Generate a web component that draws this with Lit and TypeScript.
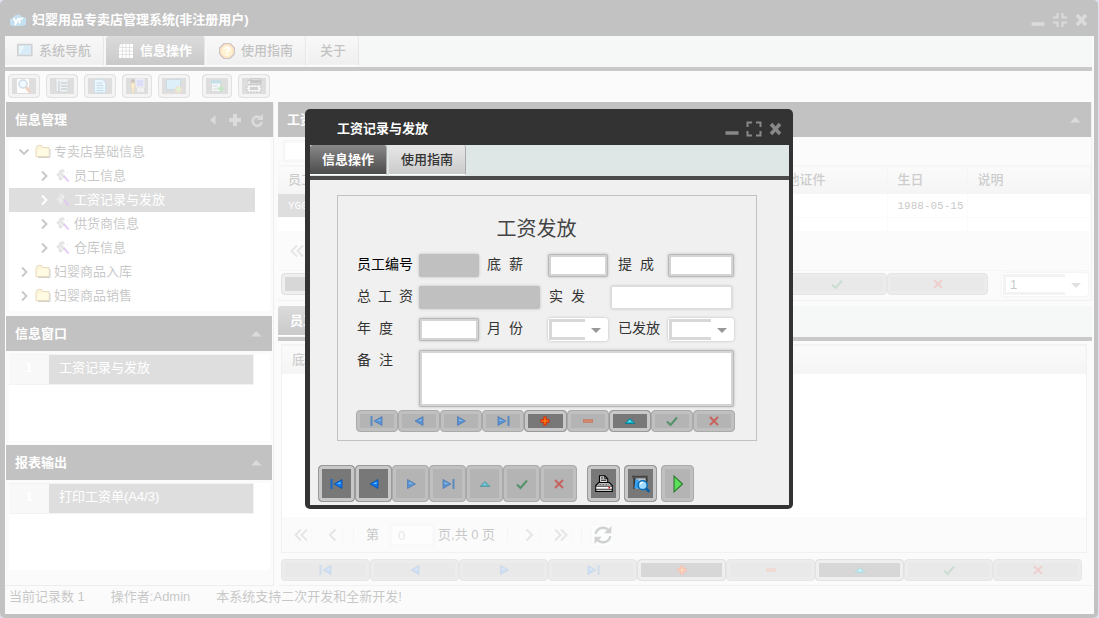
import { LitElement, html, css, svg, TemplateResult } from "lit";
import { customElement } from "lit/decorators.js";
import { classMap } from "lit/directives/class-map.js";

const shapes: Record<string, TemplateResult> = {
  first: svg`<path d="M2.5 3v10" stroke="#1468c8" stroke-width="2"/><path d="M13 3.5v9L5 8z" fill="#0a78f0" stroke="#0a4fa8" stroke-width=".8"/><path d="M11.5 6v2H8z" fill="#7cc4ff"/>`,
  prev: svg`<path d="M12 3.5v9L4 8z" fill="#0a78f0" stroke="#0a4fa8" stroke-width=".8"/><path d="M10.500 6v2H7z" fill="#7cc4ff"/>`,
  next: svg`<path d="M4.500 3.500v9l8-4.500z" fill="#0a78f0" stroke="#0a4fa8" stroke-width=".8"/><path d="M6 6v2h4z" fill="#7cc4ff"/>`,
  last: svg`<path d="M13.500 3v10" stroke="#1468c8" stroke-width="2"/><path d="M3 3.500v9L11 8z" fill="#0a78f0" stroke="#0a4fa8" stroke-width=".8"/><path d="M4.500 6v2h4z" fill="#7cc4ff"/>`,
  add: svg`<path d="M8 3.500v9M3.500 8h9" stroke="#e02800" stroke-width="3.400"/><path d="M8 4.500v7M4.500 8h7" stroke="#ff9a20" stroke-width="1"/>`,
  remove: svg`<path d="M3 8h10" stroke="#e02800" stroke-width="3.200"/><path d="M3.500 8h9" stroke="#ffa060" stroke-width="1"/>`,
  edit: svg`<path d="M3 10.500h10L8 5.500z" fill="#10b8d0" stroke="#087890" stroke-width=".8"/><path d="M6 9h3L8 7z" fill="#7ceaff"/>`,
  check: svg`<path d="M3 8.500l3.500 3.500L13 4.500" stroke="#087830" stroke-width="2" fill="none"/>`,
  cross: svg`<path d="M4 4l8 8M12 4l-8 8" stroke="#d81c10" stroke-width="1.800" fill="none"/>`,
  print: svg`<g transform="scale(.667)"><path d="M6 10V1h7l4 4v5" fill="#ddd" stroke="#000" stroke-width="1.500"/><path d="M13 1v4h4M8 4h3M8 7h7" stroke="#000" stroke-width="1.200" fill="none"/><path d="M1 14l4-4h14l4 4v8H1z" fill="#ccc" stroke="#000" stroke-width="1.500"/><path d="M1 15h22v4H1z" fill="#fff" stroke="#000"/><path d="M5 12.500h14" stroke="#555" stroke-width="2" stroke-dasharray="1 1"/><path d="M18 17h2" stroke="#e00" stroke-width="2"/></g>`,
  preview: svg`<path d="M0 1.500h14" stroke="#444" stroke-width="1.600"/><path d="M2 2.500v10M13 2.500v4" stroke="#333" stroke-width="1.500"/><path d="M4 3h8v9H3z" fill="#c0c8d0"/><path d="M3 4h3v8H2z" fill="#38a0f0"/><circle cx="9.500" cy="9" r="4" fill="#9fdcff" stroke="#0870b8" stroke-width="1.400"/><path d="M7.500 8.500a2 2 0 0 1 2-2" stroke="#fff" stroke-width="1.400" fill="none"/><path d="M12.500 12l3 3" stroke="#0860a8" stroke-width="2.400"/>`,
  run: svg`<path d="M4.500 1v14L12 8z" fill="#5be05b" stroke="#2a7a2a"/>`,
  search: svg`<path d="M1 1h12v14H1z" fill="#f4f4f4"/><circle cx="7" cy="6" r="4" fill="#cdeaff" stroke="#5888a8" stroke-width="1.500"/><path d="M10 9l4 5" stroke="#d07040" stroke-width="3"/>`,
  list: svg`<path d="M2 2h12v12H2z" fill="#c8d8e0" stroke="#777"/><path d="M5 3v11M7 5h6M7 8h6M7 11h6" stroke="#556878" stroke-width="1.400"/><path d="M2 2h12" stroke="#fff"/>`,
  doc: svg`<path d="M2.500 1.500h8l3 3v10h-11z" fill="#b8e4fc" stroke="#5898c0"/><path d="M4.500 5h6M4.500 7.500h7M4.500 10h7M4.500 12.500h7" stroke="#3880b0"/>`,
  users: svg`<path d="M7 1h8v8H7z" fill="#8890e0" stroke="#ddd"/><path d="M8 10h7v4H8z" fill="#ccc"/><circle cx="4" cy="3" r="2" fill="#5a4030"/><path d="M2 5h4v5H5v5H3v-5H2z" fill="#f0c060" stroke="#a87828" stroke-width=".6"/>`,
  screen: svg`<path d="M.500 1.500h14v10h-14z" fill="#8cc8e8" stroke="#5888a8"/><path d="M1 12.500h9" stroke="#888" stroke-width="1.500"/><circle cx="12.500" cy="11.500" r="3" fill="#98d870" stroke="#d89060" stroke-width="1.200"/>`,
  form: svg`<path d="M2.500 2.500h9v11h-9z" fill="#d8e8f0" stroke="#888"/><path d="M2 4h10" stroke="#3898b8" stroke-width="3"/><path d="M4 8h5M4 11h4" stroke="#888"/><path d="M12 7v7M8.500 10.500h7" stroke="#38a838" stroke-width="1.800"/>`,
  fax: svg`<path d="M1 3h2l1-2h11v5H3" fill="#ddd" stroke="#333"/><path d="M4 3.500h11" stroke="#444" stroke-width="3"/><path d="M1 7h14v7H1z" fill="#ddd" stroke="#444" stroke-dasharray="2 1"/><path d="M4 9h8v3H4z" fill="#666"/>`,
  window: svg`<path d="M.800 1.500h14v11H.800z" fill="#7cc0e4" stroke="#666" stroke-width="1.600"/><path d="M2 3h6l-5 8H2z" fill="#b4e0f4"/>`,
  grid: svg`<path d="M3 1h12v14H1V4z" fill="#fff"/><path d="M1 4.500h14M1 8h14M1 11.500h14M4.500 1v14M8 1v14M11.500 1v14" stroke="#888" stroke-width=".8"/>`,
  help: svg`<path d="M5 .500h6L15.500 5v6L11 15.500H5L.500 11V5z" fill="#f0a840" stroke="#5a3a3c" stroke-width="1.200"/><circle cx="8" cy="8" r="5.500" fill="#ffd870"/><path d="M6 6.200a2 2 0 1 1 2.600 2c-.5.200-.6.600-.6 1.200M8 11v1.600" stroke="#fff" stroke-width="1.800" fill="none"/>`,
  folder: svg`<path d="M1 4l1.500-2.500h4L8 3.500h6v9H1z" fill="#f6dc83" stroke="#b8822e"/><path d="M2.500 5h11v7h-11z" fill="#fff0a0"/><path d="M15 5v8.500H3" stroke="#666" fill="none"/>`,
  leaf: svg`<path d="M5 2l3-1 2 3-2 1 1 4-3 4-3-2 1-2-3-2 2-2H3z" fill="#aaa"/><path d="M7 4l2 2M5 7l2 3" stroke="#eee"/><path d="M8.500 7.500l5 6" stroke="#a040d8" stroke-width="1.800"/><path d="M12 4.500h1" stroke="#999"/>`,
  open: svg`<path d="M3.500 5.500L8 10l4.500-4.500" stroke="currentColor" stroke-width="1.800" fill="none"/>`,
  closed: svg`<path d="M6 3.500L10.500 8 6 12.500" stroke="currentColor" stroke-width="1.800" fill="none"/>`,
  left: svg`<path d="M10.500 3v10L5 8z" fill="#858585"/>`,
  plus: svg`<path d="M8 2v12M2 8h12" stroke="#858585" stroke-width="4"/>`,
  reload: svg`<path d="M12 6.500A4.600 4.600 0 1 0 12.800 10" stroke="#858585" stroke-width="2.600" fill="none"/><path d="M14 2v6H8z" fill="#858585"/>`,
  up: svg`<path d="M3 10.500h10.500L8.200 5z" fill="#858585"/>`,
  min: svg`<path d="M1.500 12h13" stroke="#888" stroke-width="3.500"/>`,
  max: svg`<path d="M1.500 6V1.500H6M10 1.500h4.500V6M14.500 10v4.500H10M6 14.500H1.500V10" stroke="#888" stroke-width="2" fill="none"/>`,
  restore: svg`<path d="M1 5.500h4.500V1M10.500 1v4.500H15M15 10.500h-4.500V15M5.500 15v-4.500H1" stroke="#888" stroke-width="2" fill="none"/>`,
  close: svg`<path d="M3 3l9 10M12 3L3 13" stroke="#888" stroke-width="3.500"/>`,
  pfirst: svg`<path d="M8 2.500L2.500 8 8 13.500M14 2.500L8.500 8l5.500 5.500" stroke="#aaa" stroke-width="2" fill="none"/>`,
  pprev: svg`<path d="M10.500 2.500L5 8l5.500 5.500" stroke="#aaa" stroke-width="2" fill="none"/>`,
  pnext: svg`<path d="M5.500 2.500L11 8l-5.500 5.500" stroke="#aaa" stroke-width="2" fill="none"/>`,
  plast: svg`<path d="M2 2.500L7.500 8 2 13.500M8 2.500L13.500 8 8 13.500" stroke="#aaa" stroke-width="2" fill="none"/>`,
  refresh: svg`<path d="M1.500 7A6.500 6.500 0 0 1 13 4M14.500 9A6.500 6.500 0 0 1 3 12" stroke="#666" stroke-width="2.200" fill="none"/><path d="M15.500 0v6.500H9zM.500 16V9.500H7z" fill="#666"/>`,
  logo: svg`<path d="M4 14a4 4 0 0 1-1-8 5 5 0 0 1 9-1 4.500 4.500 0 0 1 1 9z" fill="#3c9cd0"/><path d="M3.500 6L6 10.500M8.500 6L5 13M9.500 11.500V8q.5-2 3.500-1.500" stroke="#fff" stroke-width="1.800" fill="none"/>`,
};

const icon = (name: string) =>
  html`<svg class="icon" viewBox="0 0 16 16" aria-hidden="true">${shapes[name]}</svg>`;

const names: Record<string, string> = {
  first: "首条", prev: "上一条", next: "下一条", last: "末条", add: "新增",
  remove: "删除", edit: "编辑", check: "保存", cross: "取消",
};

const navBar = (keys: string[], enabled: string[]) => keys.map(
  (k) => html`<button class="key" aria-label=${names[k]} ?disabled=${!enabled.includes(k)}>${icon(k)}</button>`
);

const allKeys = ["first", "prev", "next", "last", "add", "remove", "edit", "check", "cross"];

const pageButton = (name: string, label: string, live = false) =>
  html`<button class=${classMap({ page: true, live })} aria-label=${label}>${icon(name)}</button>`;

const tree = [
  { level: 0, open: true, text: "专卖店基础信息" },
  { level: 1, text: "员工信息" },
  { level: 1, text: "工资记录与发放", selected: true },
  { level: 1, text: "供货商信息" },
  { level: 1, text: "仓库信息" },
  { level: 0, text: "妇婴商品入库" },
  { level: 0, text: "妇婴商品销售" },
];

@customElement("app-root")
export class AppRoot extends LitElement {
  static styles = css`
    :host {
      display: block;
      position: relative;
      min-height: 100vh;
      background: #8aa0c8;
      font: 13px/20px "Liberation Sans", "Noto Sans CJK SC", sans-serif;
      color: #444;
    }
    * { box-sizing: border-box; }
    button, input, select, textarea { font: inherit; color: inherit; margin: 0; padding: 0; min-width: 0; }
    button { cursor: pointer; }
    h1, h2, h3 { margin: 0; font-size: 13px; font-weight: 700; }
    ul { list-style: none; margin: 0; padding: 0; }
    .icon { width: 16px; height: 16px; display: block; flex: none; }

    .frame {
      min-height: 100vh;
      margin-right: 1px;
      padding: 0 4px 4px 5px;
      background: #333;
      border-radius: 5px;
      display: flex;
      flex-direction: column;
    }
    .title { height: 36px; padding: 3px 4px 0 5px; display: flex; align-items: center; gap: 6px; color: #fff; }
    .title h1 { flex: 1; }
    .tool { border: 0; background: none; }
    .inner { flex: 1; background: #f0f0f0; display: flex; flex-direction: column; padding-right: 2px; }

    .tabs { display: flex; gap: 2px; height: 35px; background: #dfe6e6; border-bottom: 4px solid #4b4b4b; }
    .tab {
      height: 30px;
      padding: 0 12px;
      display: flex;
      align-items: center;
      gap: 6px;
      border: 0;
      border-right: 1px solid #aaa;
      border-bottom: 1px solid #fff;
      border-radius: 3px 3px 0 0;
      background: linear-gradient(#e8e8e8, #cacaca);
      font-weight: 500;
      color: #333;
    }
    .tab.on { background: linear-gradient(#888, #4c4c4c); color: #fff; font-weight: 700; }

    .toolbar { display: flex; gap: 6px; padding: 3px; height: 31px; }
    .key {
      flex: 1;
      height: 22px;
      display: flex;
      align-items: center;
      justify-content: center;
      border: 1px solid #999;
      border-radius: 4px;
      background: #787878;
      box-shadow: inset 0 0 0 3px #c8c8c8;
    }
    .key:disabled { background: #b4b4b4; border-color: #aaa; box-shadow: inset 0 0 0 3px #c0c0c0; }
    .key:disabled .icon { opacity: .55; }
    .toolbar .key { flex: none; width: 32px; height: 24px; background: #909090; box-shadow: inset 0 0 0 3px #dadada; }
    .toolbar .narrow { width: 30px; }
    .toolbar .split { margin-left: 6px; }

    .columns { flex: 1; display: grid; grid-template-columns: 269px minmax(0, 1fr); gap: 4px; }
    .side { border: 1px solid #c6c6c6; border-top: 0; border-left-color: #fff; }
    .bar { height: 35px; padding: 0 8px 0 9px; display: flex; align-items: center; gap: 6px; background: #333; color: #fff; }
    .bar h2 { flex: 1; }
    .box { background: #fff; margin: 3px; }
    .tree { height: 171px; margin-bottom: 5px; }
    .node { height: 24px; width: 246px; padding-left: 7px; display: flex; align-items: center; gap: 3px; }
    .node.deep { padding-left: 27px; }
    .node.selected { background: #919191; color: #fff; }
    .side .bar.low { margin-right: 1px; }
    .list { height: 87px; margin-bottom: 4px; }
    .entry { width: 245px; height: 31px; display: flex; line-height: 26px; color: #fff; background: #919191; border: 1px solid #d8d8d8; border-left: 0; }
    .entry b { width: 40px; text-align: center; background: #e8e8e8; margin-right: 10px; }

    .main { display: flex; flex-direction: column; min-width: 0; border-bottom: 1px solid #d0d0d0; }
    .panel { border: 1px solid #d0d0d0; border-width: 0 1px 1px 0; margin-bottom: 5px; }
    .find { height: 28px; padding: 3px 5px; }
    input, textarea { border: 3px solid #d4d4d4; border-radius: 2px; background: #fff; outline: 1px solid #bababa; outline-offset: -1px; box-shadow: 0 0 3px #bbb; display: block; }
    .find input { width: 122px; height: 22px; border-color: #eaeaea; outline-color: #ddd; box-shadow: none; }
    table { width: 100%; border-collapse: collapse; table-layout: fixed; background: #fff; }
    th { height: 28px; padding: 0 10px; text-align: left; font-weight: 500; color: #555; background: linear-gradient(#f0f0f0, #dcdcdc); border: 1px solid #ddd; border-left: 0; }
    td { height: 24px; padding: 0 10px; font: 11px/20px "Liberation Mono", monospace; border: 1px solid #f0f0f0; border-left: 0; white-space: nowrap; overflow: hidden; }
    td.selected { background: #919191; color: #fff; }
    tr.short td { height: 14px; }
    .c-id { width: 485px; }
    .c-cert { width: 124px; }
    .c-date { width: 80px; }
    .pager { display: flex; align-items: center; gap: 9px; height: 38px; padding: 0 7px; }
    .page { width: 23px; height: 23px; border: 1px solid #e6eaea; border-radius: 3px; background: #f0f2f2; display: grid; place-items: center; }
    .page.live { background: #f6f8f8; }
    .page.live .icon { width: 18px; height: 18px; }
    .rule { width: 1px; height: 15px; background: #ddd; }
    .pages { display: flex; align-items: center; gap: 3px; padding: 0 3px; }
    .pages label { display: flex; align-items: center; gap: 10px; }
    .pages input { width: 46px; height: 24px; padding-left: 6px; border-color: #ececec; outline-color: #e6e6e6; box-shadow: none; background: #f8f8f8; color: #aaa; }
    .keys { display: flex; }
    .upper { display: flex; gap: 14px; height: 30px; padding: 2px 3px 0; border-top: 1px solid #e0e0e0; }
    .upper .keys { flex: 1; max-width: 707px; }
    .upper .combo { width: 86px; }
    .detail { flex: 1; margin: 3px 5px 6px 3px; border: 1px solid #d0d0d0; display: flex; flex-direction: column; }
    .detail .blank { flex: 1; background: #fff; }
    .detail .pager { height: 35px; padding-top: 1px; }
    .main > .keys { margin: 0 10px 4px 3px; }
    .status { display: flex; gap: 26px; height: 28px; padding: 1px 4px; }

    .mask { position: absolute; inset: 0; display: grid; place-items: center; padding-right: 1px; background: rgba(255, 255, 255, .7); }
    .dialog { width: 488px; background: #333; border-radius: 5px; padding: 0 4px 4px 5px; }
    .dialog .title { padding: 3px 5px 0 27px; }
    .dialog .inner { padding-right: 0; }
    .body { padding: 15px 32px 0 27px; }
    .form { border: 1px solid #c2c2c2; padding: 18px 22px 8px 19px; display: flex; flex-direction: column; gap: 9px; min-width: 0; margin: 0; }
    .form h3 { font-size: 20px; line-height: 31px; font-weight: 400; text-align: center; padding-right: 18px; }
    .row { display: grid; grid-template-columns: 62px 68px 61px 70px 50px 66px; font-size: 14px; align-items: start; }
    .row.wide { grid-template-columns: 62px 130px 62px 122px; }
    .row.note { grid-template-columns: 62px 1fr; }
    .row label { width: 36px; text-align-last: justify; color: #333; line-height: 20px; white-space: nowrap; }
    .row .three { width: 56px; }
    .row .full { width: auto; text-align-last: auto; }
    .row .key-field { color: #000; }
    .row input { height: 23px; width: 60px; }
    .row .last { width: 66px; }
    .row input:disabled { border-color: #c0c0c0; background: #c0c0c0; outline: 0; }
    .row .long { width: 121px; }
    .row .plain { width: 121px; border: 1px solid #ddd; outline: 0; }
    textarea { height: 57px; width: 100%; resize: none; }
    .combo { display: flex; width: 60px; height: 23px; padding: 1px; background: #fff; border-radius: 3px; box-shadow: 0 0 3px #bbb; }
    .combo.last { width: 66px; }
    .combo select { flex: 1; appearance: none; border: 3px solid #d8d8d8; border-right: 0; background: #fff; padding-left: 4px; line-height: 15px; }
    .arrow { width: 22px; display: grid; place-items: center; padding-top: 2px; }
    .arrow::before { content: ""; border: 5px solid transparent; border-top-color: #999; border-bottom: 0; }
    .form .keys { margin: -6px -1px 0 -1px; }
    .actions { display: flex; padding: 24px 0 3px 8px; }
    .actions .key { flex: none; width: 37px; height: 37px; }
    .actions .tall { width: 33px; margin-right: 4px; }
    .actions .tall:disabled .icon { opacity: 1; }
    .actions .tall .icon { width: 18px; height: 18px; }
    .actions .start { margin-left: 10px; }
  `;

  private combo(id: string, value: string, size = "") {
    return html`
      <span class="combo ${size}">
        <select id=${id} aria-label=${value ? "页码" : id}><option>${value}</option></select>
        <span class="arrow"></span>
      </span>`;
  }

  private windowTools(size: string) {
    return html`
      <button class="tool" aria-label="最小化">${icon("min")}</button>
      <button class="tool" aria-label="缩放">${icon(size)}</button>
      <button class="tool" aria-label="关闭">${icon("close")}</button>`;
  }

  private sidePanel(title: string, entry: string) {
    return html`
      <div class="bar low"><h2>${title}</h2><button class="tool" aria-label="折叠">${icon("up")}</button></div>
      <div class="box list"><div class="entry"><b>1</b>${entry}</div></div>`;
  }

  private side() {
    return html`
      <aside class="side">
        <div class="bar">
          <h2>信息管理</h2>
          <button class="tool" aria-label="收起">${icon("left")}</button>
          <button class="tool" aria-label="添加">${icon("plus")}</button>
          <button class="tool" aria-label="刷新">${icon("reload")}</button>
        </div>
        <ul class="box tree">
          ${tree.map((n) => html`
            <li class=${classMap({ node: true, deep: n.level === 1, selected: !!n.selected })}>
              ${icon(n.open ? "open" : "closed")}${icon(n.level ? "leaf" : "folder")}<span>${n.text}</span>
            </li>`)}
        </ul>
        ${this.sidePanel("信息窗口", "工资记录与发放")}
        ${this.sidePanel("报表输出", "打印工资单(A4/3)")}
      </aside>`;
  }

  private main() {
    return html`
      <main class="main">
        <section class="panel">
          <div class="bar"><h2>工资记录</h2><button class="tool" aria-label="折叠">${icon("up")}</button></div>
          <div class="find"><input aria-label="查找" /></div>
          <table>
            <colgroup><col class="c-id" /><col class="c-cert" /><col class="c-date" /><col /></colgroup>
            <thead><tr><th>员工编号</th><th>其他证件</th><th>生日</th><th>说明</th></tr></thead>
            <tbody>
              <tr><td class="selected">YG001</td><td></td><td>1988-05-15</td><td></td></tr>
              <tr class="short"><td></td><td></td><td></td><td></td></tr>
            </tbody>
          </table>
          <div class="pager">${pageButton("pfirst", "首页")}</div>
          <div class="upper">
            <div class="keys">${navBar(["first", "prev", "next", "last", "edit", "check", "cross"], ["first"])}</div>
            ${this.combo("page", "1")}
          </div>
        </section>
        <div class="tabs"><button class="tab on">员工工资</button></div>
        <section class="detail">
          <table><thead><tr><th>底薪</th></tr></thead></table>
          <div class="blank"></div>
          <div class="pager">
            ${pageButton("pfirst", "首页")}${pageButton("pprev", "上一页")}
            <span class="rule"></span>
            <div class="pages">
              <label>第 <input value="0" /></label>
              <span>页,共 0 页</span>
            </div>
            <span class="rule"></span>
            ${pageButton("pnext", "下一页")}${pageButton("plast", "末页")}
            <span class="rule"></span>
            ${pageButton("refresh", "刷新", true)}
          </div>
        </section>
        <div class="keys">${navBar(allKeys, ["add", "edit"])}</div>
      </main>`;
  }

  private dialog() {
    return html`
      <div class="dialog" role="dialog" aria-label="工资记录与发放">
        <header class="title"><h1>工资记录与发放</h1>${this.windowTools("max")}</header>
        <div class="inner">
          <div class="tabs"><button class="tab on">信息操作</button><button class="tab">使用指南</button></div>
          <div class="body">
            <form class="form">
              <h3>工资发放</h3>
              <div class="row">
                <label class="full key-field" for="code">员工编号</label><input id="code" disabled />
                <label for="base">底 薪</label><input id="base" />
                <label for="bonus">提 成</label><input id="bonus" class="last" />
              </div>
              <div class="row wide">
                <label class="three" for="total">总 工 资</label><input id="total" class="long" disabled />
                <label for="paid">实 发</label><input id="paid" class="plain" />
              </div>
              <div class="row">
                <label for="year">年 度</label><input id="year" />
                <label for="月份">月 份</label>${this.combo("月份", "")}
                <label class="full" for="已发放">已发放</label>${this.combo("已发放", "", "last")}
              </div>
              <div class="row note"><label for="note">备 注</label><textarea id="note"></textarea></div>
              <div class="keys">${navBar(allKeys, ["add", "edit"])}</div>
            </form>
          </div>
          <div class="actions">
            ${navBar(["first", "prev", "next", "last", "edit", "check", "cross"], ["first", "prev"])}
            <button class="key tall start" aria-label="打印">${icon("print")}</button>
            <button class="key tall" aria-label="预览">${icon("preview")}</button>
            <button class="key tall" aria-label="执行" disabled>${icon("run")}</button>
          </div>
        </div>
      </div>`;
  }

  render() {
    return html`
      <div class="frame" inert>
        <header class="title">${icon("logo")}<h1>妇婴用品专卖店管理系统(非注册用户)</h1>${this.windowTools("restore")}</header>
        <div class="inner">
          <nav class="tabs">
            <button class="tab">${icon("window")}系统导航</button>
            <button class="tab on">${icon("grid")}信息操作</button>
            <button class="tab">${icon("help")}使用指南</button>
            <button class="tab">关于</button>
          </nav>
          <div class="toolbar">
            <button class="key" aria-label="查询">${icon("search")}</button>
            <button class="key" aria-label="列表">${icon("list")}</button>
            <button class="key" aria-label="文档">${icon("doc")}</button>
            <button class="key narrow" aria-label="用户">${icon("users")}</button>
            <button class="key" aria-label="界面">${icon("screen")}</button>
            <button class="key narrow split" aria-label="新增">${icon("form")}</button>
            <button class="key" aria-label="打印">${icon("fax")}</button>
          </div>
          <div class="columns">${this.side()}${this.main()}</div>
          <footer class="status"><span>当前记录数 1</span><span>操作者:Admin</span><span>本系统支持二次开发和全新开发!</span></footer>
        </div>
      </div>
      <div class="mask">${this.dialog()}</div>`;
  }
}
